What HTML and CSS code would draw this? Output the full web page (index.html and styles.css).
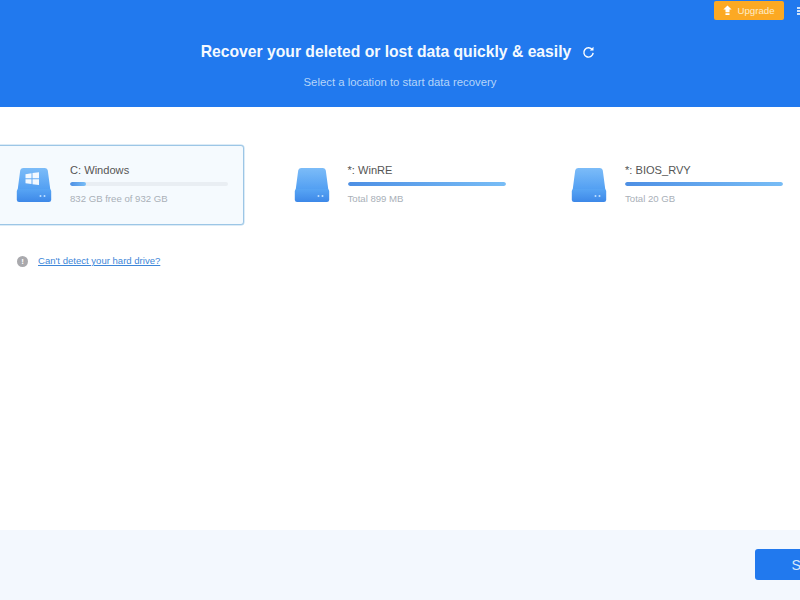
FILE: index.html
```html
<!DOCTYPE html>
<html lang="en">
<head>
<meta charset="utf-8">
<title>Data Recovery</title>
<link rel="stylesheet" href="styles.css">
</head>
<body>
<div class="app">
  <header class="hero">
    <div class="topbar">
      <button class="upgrade">
        <svg class="upgrade-icon" viewBox="0 0 12 12" width="11" height="11"><path d="M6 0.5 L10.5 5 H8.2 V8 H3.8 V5 H1.5 Z M3.8 9 H8.2 V11 H3.8 Z" fill="#fff"/></svg>
        <span>Upgrade</span>
      </button>
      <div class="menu"><i></i><i></i><i></i></div>
    </div>
    <div class="title-row">
      <h1>Recover your deleted or lost data quickly &amp; easily</h1>
      <svg class="refresh" viewBox="0 0 14 14" width="13" height="13"><path d="M11.2 4.2 A5 5 0 1 0 12 7.4" fill="none" stroke="#fff" stroke-width="1.5"/><path d="M8.4 4.9 H12.4 V0.9 Z" fill="#fff"/></svg>
    </div>
    <p class="subtitle">Select a location to start data recovery</p>
  </header>
  <main class="content">
    <div class="drives">
      <div class="drive selected">
        <svg class="disk" viewBox="0 0 36 36" width="36" height="36">
          <use href="#disk-shape"/>
          <path d="M9.5 7.2 L15.5 6.3 V11.2 H9.5 Z M16.5 6.1 L23 5.2 V11.2 H16.5 Z M9.5 12.2 H15.5 V17 L9.5 16.2 Z M16.5 12.2 H23 V18 L16.5 17.2 Z" fill="#fff" fill-opacity=".92"/>
        </svg>
        <div class="info">
          <div class="name">C: Windows</div>
          <div class="track"><div class="fill" style="width:10%"></div></div>
          <div class="meta">832 GB free of 932 GB</div>
        </div>
      </div>
      <div class="drive">
        <svg class="disk" viewBox="0 0 36 36" width="36" height="36"><use href="#disk-shape"/></svg>
        <div class="info">
          <div class="name">*: WinRE</div>
          <div class="track"><div class="fill" style="width:100%"></div></div>
          <div class="meta">Total 899 MB</div>
        </div>
      </div>
      <div class="drive">
        <svg class="disk" viewBox="0 0 36 36" width="36" height="36"><use href="#disk-shape"/></svg>
        <div class="info">
          <div class="name">*: BIOS_RVY</div>
          <div class="track"><div class="fill" style="width:100%"></div></div>
          <div class="meta">Total 20 GB</div>
        </div>
      </div>
    </div>
    <div class="help">
      <span class="help-icon">!</span>
      <a class="help-link" href="#">Can't detect your hard drive?</a>
    </div>
  </main>
  <footer class="footer">
    <button class="scan">Scan</button>
  </footer>
</div>
<svg class="defs" width="0" height="0">
  <defs>
    <linearGradient id="disk-top" x1="0" y1="0" x2="0" y2="1"><stop offset="0" stop-color="#7cbcf8"/><stop offset="1" stop-color="#4f9df2"/></linearGradient>
    <linearGradient id="disk-base" x1="0" y1="0" x2="0" y2="1"><stop offset="0" stop-color="#58a5f4"/><stop offset="1" stop-color="#3d88e8"/></linearGradient>
    <g id="disk-shape">
      <path d="M4.2 3.5 Q4.5 1 7 1 H29 Q31.5 1 31.8 3.5 L34.5 24 H1.5 Z" fill="url(#disk-top)"/>
      <path d="M0.8 24 Q1 22 3 22 H33 Q35 22 35.2 24 V33 Q35 35 33 35 H3 Q1 35 0.8 33 Z" fill="url(#disk-base)"/>
      <circle cx="24.5" cy="29" r="1" fill="#bfe0ff"/><circle cx="28.5" cy="29" r="1" fill="#bfe0ff"/>
    </g>
  </defs>
</svg>
</body>
</html>
```
FILE: styles.css
```css
* { box-sizing: border-box; }
html, body { margin: 0; padding: 0; height: 100%; overflow: hidden; }
body { font-family: "Liberation Sans", Arial, sans-serif; background: #fff; color: #555; }
.app { width: 800px; height: 600px; display: flex; flex-direction: column; overflow: hidden; }

.hero { height: 107px; background: #2179ee; color: #fff; display: flex; flex-direction: column; align-items: center; flex: none; }
.topbar { align-self: stretch; height: 20px; display: flex; justify-content: flex-end; align-items: flex-start; padding-top: 1px; margin-right: -8px; gap: 13px; }
.upgrade { width: 70px; height: 19px; border: 0; border-radius: 2px; background: #fca923; color: #fdecc8; font: 9.7px "Liberation Sans", Arial, sans-serif; display: flex; align-items: center; justify-content: center; gap: 4px; padding: 0 1px 0 0; }
.menu { width: 11px; display: flex; flex-direction: column; gap: 1px; padding-top: 6px; }
.menu i { display: block; height: 2px; background: #cfe3fb; }
.title-row { display: flex; align-items: center; gap: 11px; margin-top: 22px; padding-right: 4px; height: 20px; }
h1 { margin: 0; font-size: 15.7px; font-weight: 700; line-height: 20px; color: #f4f9ff; }
.refresh { display: block; margin-top: 1px; }
.subtitle { margin: 12px 0 0; font-size: 11.35px; line-height: 16px; color: #b5d5fa; }

.content { flex: 1; padding-top: 38px; }
.drives { display: flex; gap: 27.5px; margin-left: -6px; }
.drive { width: 250px; height: 80px; flex: none; display: flex; align-items: center; gap: 18px; padding: 0 15px 0 23px; border: 1px solid transparent; border-radius: 3px; }
.drive.selected { background: #f5fafe; border-color: #9cc6e6; box-shadow: 0 0 0 0.5px #b9d8ee; }
.disk { flex: none; display: block; margin-left: -2px; }
.info { flex: 1; min-width: 0; }
.name { font-size: 11.1px; line-height: 13px; color: #555; }
.track { height: 4px; border-radius: 2px; background: #e9eef3; margin: 5px 0 6px; overflow: hidden; }
.fill { height: 100%; border-radius: 2px; background: linear-gradient(90deg, #4d8fe4, #78bdf6); }
.meta { font-size: 9.6px; line-height: 14px; color: #a9b0b8; }

.help { display: flex; align-items: center; gap: 10px; margin: 29px 0 0 17px; }
.help-icon { width: 11px; height: 11px; border-radius: 50%; background: #a9a9ad; color: #fff; font-size: 8px; font-weight: 700; line-height: 11px; text-align: center; }
.help-link { font-size: 9.55px; line-height: 14px; color: #3d86d8; text-decoration: underline; }

.footer { height: 70px; flex: none; background: #f3f8fe; display: flex; justify-content: flex-end; align-items: flex-start; padding-top: 19px; }
.scan { width: 105px; height: 31px; flex: none; margin-right: -60px; border: 0; border-radius: 3px; background: #2179ee; color: #d7e8fc; font: 14px "Liberation Sans", Arial, sans-serif; padding: 0; }
.defs { position: absolute; }
```
